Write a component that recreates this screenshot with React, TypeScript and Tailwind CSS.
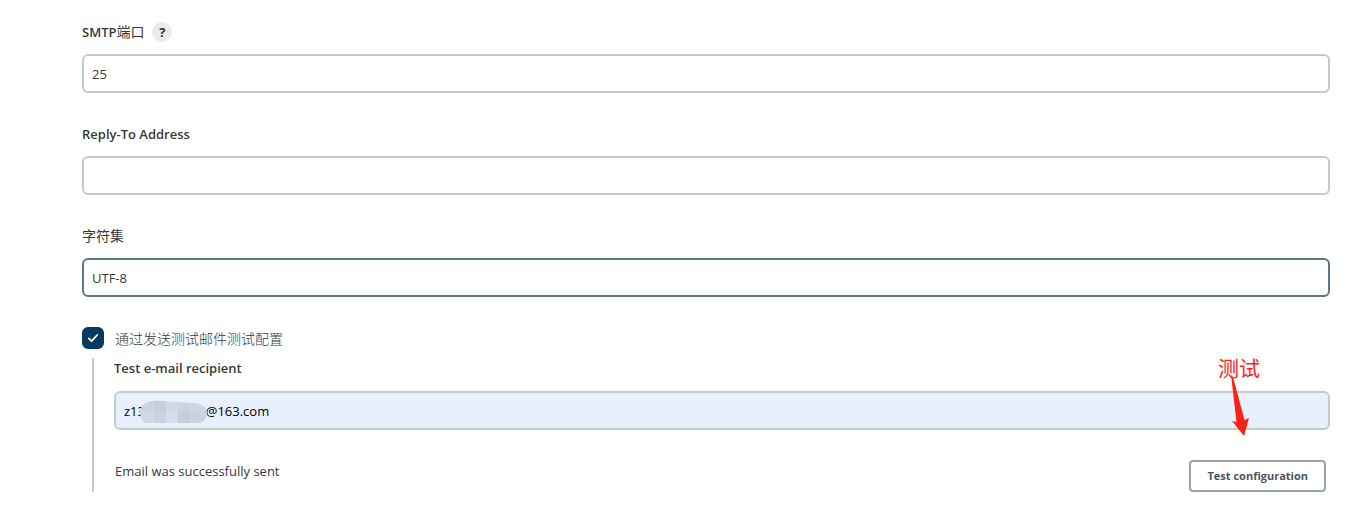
import React, { useState } from "react";

const inputBase =
  "block h-[39px] w-full rounded-md border-2 px-2 text-[13px] outline-none";

function Field({
  id,
  label,
  help,
  value,
  onChange,
  active,
}: {
  id: string;
  label: React.ReactNode;
  help?: boolean;
  value: string;
  onChange: (value: string) => void;
  active?: boolean;
}) {
  return (
    <div>
      <div className="mb-3 flex h-5 items-center gap-2">
        <label htmlFor={id} className="font-semibold">
          {label}
        </label>
        {help && (
          <button
            type="button"
            className="flex h-5 w-5 items-center justify-center rounded-full bg-[#ebebeb] text-[13px] font-bold text-[#333]"
          >
            ?
          </button>
        )}
      </div>
      <input
        id={id}
        type="text"
        value={value}
        onChange={(e) => onChange(e.target.value)}
        className={`${inputBase} bg-white ${active ? "border-[#5c7889]" : "border-[#c1cccf]"}`}
      />
    </div>
  );
}

export default function App() {
  const [port, setPort] = useState("25");
  const [replyTo, setReplyTo] = useState("");
  const [charset, setCharset] = useState("UTF-8");
  const [testEnabled, setTestEnabled] = useState(true);
  const [recipient, setRecipient] = useState("z13" + " ".repeat(18) + "@163.com");

  return (
    <div className="min-h-screen bg-white pt-[22px] pr-[27px] pb-8 pl-[82px] font-['Open_Sans','Noto_Sans_CJK_SC',sans-serif] text-[13px] leading-5 text-[#383838]">
      <form className="flex flex-col" onSubmit={(e) => e.preventDefault()}>
        <div className="flex flex-col gap-[31px]">
          <Field
            id="port"
            label={
              <>
                SMTP<span className="text-sm leading-5 font-normal">端口</span>
              </>
            }
            help
            value={port}
            onChange={setPort}
          />
          <Field id="replyTo" label="Reply-To Address" value={replyTo} onChange={setReplyTo} />
          <Field
            id="charset"
            label={<span className="text-sm leading-5 font-normal">字符集</span>}
            value={charset}
            onChange={setCharset}
            active
          />
        </div>

        <div className="mt-[30px] flex items-center gap-[11px]">
          <span className="grid h-[22px] w-[22px]">
            <input
              id="sendTest"
              type="checkbox"
              checked={testEnabled}
              onChange={(e) => setTestEnabled(e.target.checked)}
              className="col-start-1 row-start-1 appearance-none rounded-md border-2 border-[#c1cccf] checked:border-[#063b5f] checked:bg-[#063b5f]"
            />
            {testEnabled && (
              <svg
                viewBox="0 0 22 22"
                className="pointer-events-none col-start-1 row-start-1"
                fill="none"
                stroke="white"
                strokeWidth="1.8"
                strokeLinecap="round"
                strokeLinejoin="round"
              >
                <path d="M6.8 11.4 L9.6 14.2 L15.2 8" />
              </svg>
            )}
          </span>
          <label
            htmlFor="sendTest"
            className="font-['Noto_Sans_CJK_SC',sans-serif] text-sm leading-5 font-light"
          >
            通过发送测试邮件测试配置
          </label>
        </div>

        {testEnabled && (
          <div className="mt-[9px] ml-[10px] border-l-2 border-[#c1cccf] pl-5">
            <label htmlFor="recipient" className="mb-3 block leading-[21px] font-semibold">
              Test e-mail recipient
            </label>
            <div className="relative">
              <input
                id="recipient"
                type="text"
                value={recipient}
                onChange={(e) => setRecipient(e.target.value)}
                className={`${inputBase} border-[#c1cccf] bg-[#e8effd] text-black`}
              />
              {/* mosaic over the private part of the address */}
              <svg viewBox="0 0 70 24" className="pointer-events-none absolute top-2 left-6 h-6 w-[70px]">
                <clipPath id="mask">
                  <path d="M2 11 Q4 3 15 2 Q22 1 31 3 L57 4 Q69 6 69 15 Q68 22 62 24 H8 Q1 20 2 11Z" />
                </clipPath>
                <g clipPath="url(#mask)">
                  <path fill="#cdd2e0" d="M0 0h70v24H0z" />
                  <path fill="#c8cddb" d="M16 0h12v12H16zM40 12h12v12H40z" />
                  <path fill="#d2d7e5" d="M28 0h12v12H28zM4 12h12v12H4z" />
                  <path fill="#d3deed" d="M28 12h12v12H28z" />
                  <path fill="#d0d5e2" d="M52 0h18v12H52z" />
                </g>
              </svg>
              {/* hand-drawn note pointing at the test button */}
              <div className="pointer-events-none absolute -top-9 right-[66px] w-[46px] text-[21px] leading-6 text-[#ff2015]">
                <span className="font-['Noto_Sans_CJK_SC',sans-serif]">测试</span>
                <svg viewBox="0 0 46 62" className="absolute top-5 left-0 h-[62px] w-[46px]" fill="#ff2015">
                  <path d="M13 0 L15 2 L26.5 45 L31 43 L26 61 L14 46 L18.5 47 Z" />
                </svg>
              </div>
            </div>
            <div className="mt-[30px] flex items-start justify-between pr-1 pl-px">
              <p className="pt-px">Email was successfully sent</p>
              <button
                type="button"
                className="h-8 rounded border-2 border-[#98a4ad] bg-white px-4 text-[11px] font-bold text-[#4d545d]"
              >
                Test configuration
              </button>
            </div>
          </div>
        )}
      </form>
    </div>
  );
}
